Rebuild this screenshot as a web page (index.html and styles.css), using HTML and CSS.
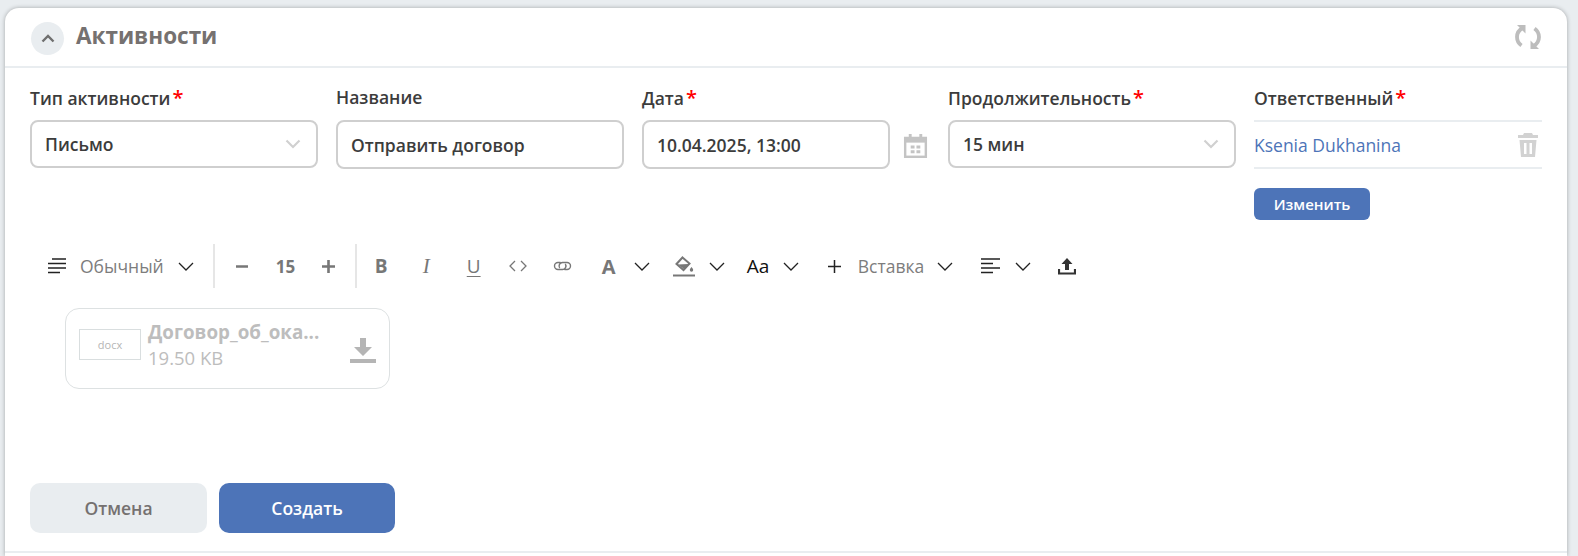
FILE: index.html
```html
<!DOCTYPE html>
<html lang="en">
<head>
  <meta charset="UTF-8">
  <title>Активности</title>
  <link rel="stylesheet" href="styles.css">
</head>
<body>
  <section class="card">
    <header class="card-head">
      <span class="collapse">
        <svg width="14" height="9" viewBox="0 0 14 9"><path d="M1.500 7.500L7 2l5.500 5.500" fill="none" stroke="#6f6f6f" stroke-width="2.400"/></svg>
      </span>
      <h2 class="card-title">Активности</h2>
      <svg class="refresh" width="26" height="26" viewBox="0 0 26 26">
        <path d="M7.500 4C4 6 2 9 2 13c0 3.500 1.700 6.500 4.500 8.500" fill="none" stroke="#bdbdbd" stroke-width="3.800"/>
        <path d="M2 1h8.500v8.500z" fill="#bdbdbd"/>
        <path d="M18.500 22C22 20 24 17 24 13c0-3.500-1.700-6.500-4.500-8.500" fill="none" stroke="#bdbdbd" stroke-width="3.800"/>
        <path d="M24 25h-8.500v-8.500z" fill="#bdbdbd"/>
      </svg>
    </header>

    <div class="fields">
      <div class="field">
        <label class="label">Тип активности<span class="req">*</span></label>
        <div class="input input-select">Письмо
          <svg class="caret" width="16" height="10" viewBox="0 0 16 10"><path d="M1.500 1.500L8 8l6.500-6.500" fill="none" stroke="#d0d0d0" stroke-width="2.200"/></svg>
        </div>
      </div>
      <div class="field">
        <label class="label">Название</label>
        <div class="input">Отправить договор</div>
      </div>
      <div class="field">
        <label class="label">Дата<span class="req">*</span></label>
        <div class="date-row">
          <div class="input input-date">10.04.2025, 13:00</div>
          <svg class="ic-cal" width="25" height="25" viewBox="0 0 26 26">
            <path d="M1 4h5V1h3v3h8V1h3v3h5v22H1z" fill="#c4c4c4"/>
            <rect x="3.500" y="10" width="19" height="13.500" fill="#fff"/>
            <path d="M8 13h4v3H8zM14 13h4v3h-4zM8 18h4v3H8zM14 18h4v3h-4z" fill="#c4c4c4"/>
          </svg>
        </div>
      </div>
      <div class="field">
        <label class="label">Продолжительность<span class="req">*</span></label>
        <div class="input input-select">15 мин
          <svg class="caret" width="16" height="10" viewBox="0 0 16 10"><path d="M1.500 1.500L8 8l6.500-6.500" fill="none" stroke="#d0d0d0" stroke-width="2.200"/></svg>
        </div>
      </div>
      <div class="field">
        <label class="label">Ответственный<span class="req">*</span></label>
        <div class="owner">
          <a class="owner-name">Ksenia Dukhanina</a>
          <svg width="22" height="26" viewBox="0 0 22 26">
            <path d="M7 1h8l1 2h5v3H1V3h5z" fill="#d2d2d2"/>
            <path d="M2.500 8h17l-1.500 17H4zM7 11v11h2.500V11zM12.500 11v11H15V11z" fill="#d2d2d2" fill-rule="evenodd"/>
          </svg>
        </div>
        <button class="btn-small">Изменить</button>
      </div>
    </div>

    <div class="toolbar">
      <svg class="ic-style" width="18" height="16" viewBox="0 0 18 16"><path d="M4 1h14M0 5.500h18M0 10h18M0 14.500h12" stroke="#222" stroke-width="1.500"/></svg>
      <span class="tool-text tool-style">Обычный</span>
      <svg class="chev" width="16" height="9" viewBox="0 0 16 9"><path d="M1 1l7 7 7-7" fill="none" stroke="#222" stroke-width="1.300"/></svg>
      <span class="sep sep-a"></span>
      <svg class="size-minus" width="12" height="3" viewBox="0 0 12 3"><path d="M0 1.500h12" stroke="#777" stroke-width="2.500"/></svg>
      <span class="size-num">15</span>
      <svg class="size-plus" width="13" height="13" viewBox="0 0 13 13"><path d="M0 6.500h13M6.500 0v13" stroke="#777" stroke-width="2.600"/></svg>
      <span class="sep sep-b"></span>
      <span class="fmt fmt-b">B</span>
      <span class="fmt fmt-i">I</span>
      <span class="fmt fmt-u">U</span>
      <svg class="ic-code" width="18" height="12" viewBox="0 0 18 12"><path d="M6 1L1 6l5 5M12 1l5 5-5 5" fill="none" stroke="#777" stroke-width="1.300"/></svg>
      <svg class="ic-link" width="19" height="10" viewBox="0 0 19 10"><path d="M7.500 1.500H5a3.500 3.500 0 0 0 0 7h4.500a3.500 3.500 0 0 0 2.800-5.500M11.500 8.500H14a3.500 3.500 0 0 0 0-7H9.500a3.500 3.500 0 0 0-2.800 5.500" fill="none" stroke="#777" stroke-width="1.400"/></svg>
      <span class="fmt fmt-a">A</span>
      <svg class="chev chev-a" width="16" height="9" viewBox="0 0 16 9"><path d="M1 1l7 7 7-7" fill="none" stroke="#222" stroke-width="1.300"/></svg>
      <svg class="ic-fill" width="22" height="21" viewBox="0 0 22 21">
        <path d="M9.500 1.500l7 6-6 6.500-7-6z" fill="none" stroke="#777" stroke-width="2"/>
        <path d="M5 8.500l10.500-.5-4.500 5z" fill="#777"/>
        <path d="M18.500 11c1.200 1.500 1.700 2.400 1.700 3.100a1.700 1.700 0 0 1-3.400 0c0-.7.500-1.600 1.700-3.100z" fill="#777"/>
        <path d="M0 19.500h22" stroke="#777" stroke-width="2"/>
      </svg>
      <svg class="chev chev-fill" width="16" height="9" viewBox="0 0 16 9"><path d="M1 1l7 7 7-7" fill="none" stroke="#222" stroke-width="1.300"/></svg>
      <span class="fmt-aa">Aa</span>
      <svg class="chev chev-aa" width="16" height="9" viewBox="0 0 16 9"><path d="M1 1l7 7 7-7" fill="none" stroke="#222" stroke-width="1.300"/></svg>
      <svg class="ic-plus" width="13" height="13" viewBox="0 0 13 13"><path d="M0 6.500h13M6.500 0v13" stroke="#222" stroke-width="1.500"/></svg>
      <span class="tool-text tool-insert">Вставка</span>
      <svg class="chev" width="16" height="9" viewBox="0 0 16 9"><path d="M1 1l7 7 7-7" fill="none" stroke="#222" stroke-width="1.300"/></svg>
      <svg class="ic-align" width="19" height="16" viewBox="0 0 19 16"><path d="M0 1h19M0 5.500h12M0 10h19M0 14.500h12" stroke="#222" stroke-width="1.500"/></svg>
      <svg class="chev chev-align" width="16" height="9" viewBox="0 0 16 9"><path d="M1 1l7 7 7-7" fill="none" stroke="#222" stroke-width="1.300"/></svg>
      <svg class="ic-upload" width="18" height="18" viewBox="0 0 18 18"><path d="M9 1l5.500 6H11v6H7V7H3.500z" fill="#333"/><path d="M1 12v4.500h16V12" fill="none" stroke="#333" stroke-width="2.200"/></svg>
    </div>

    <div class="attachment">
      <span class="thumb">docx</span>
      <div class="file-info">
        <div class="file-name">Договор_об_ока...</div>
        <div class="file-size">19.50 KB</div>
      </div>
      <svg class="file-down" width="26" height="25" viewBox="0 0 26 25"><path d="M10 1h6v9h6l-9 9-9-9h6z" fill="#b5b5b5" transform="translate(0 -1)"/><path d="M0 23h26" stroke="#b5b5b5" stroke-width="4"/></svg>
    </div>

    <div class="actions">
      <button class="btn btn-cancel">Отмена</button>
      <button class="btn btn-create">Создать</button>
    </div>
  </section>
</body>
</html>
```

FILE: styles.css
```css
html, body {
  height: 100%;
}

body {
  margin: 0;
  padding: 8px 11px 0 5px;
  box-sizing: border-box;
  overflow: hidden;
  background-color: #e9edf0;
  font-family: 'Open Sans', 'Noto Sans', sans-serif;
  color: #3c3c3c;
}

.card {
  height: 548px;
  box-sizing: border-box;
  background-color: #fff;
  border-radius: 14px 14px 0 0;
  box-shadow: 0 0 4px rgba(0, 0, 0, 0.3);
  display: flex;
  flex-direction: column;
}

/* Header */
.card-head {
  height: 60px;
  flex: none;
  box-sizing: border-box;
  border-bottom: 2px solid #e9edf0;
  display: flex;
  align-items: center;
  padding: 0 26px 0 26px;
}

.collapse {
  width: 33px;
  height: 33px;
  margin-top: 3px;
  border-radius: 50%;
  background-color: #e9edf0;
  display: flex;
  align-items: center;
  justify-content: center;
}

.card-title {
  margin: 0 0 2px 12px;
  font-size: 22.500px;
  font-weight: 700;
  line-height: 30px;
  color: #757170;
}

.refresh {
  margin-left: auto;
}

/* Fields */
.fields {
  display: grid;
  grid-template-columns: repeat(5, 288px);
  column-gap: 18px;
  padding: 15px 0 0 25px;
  height: 149px;
  flex: none;
  box-sizing: border-box;
}

.label {
  display: block;
  height: 37px;
  line-height: 29px;
  font-size: 17.500px;
  font-weight: 600;
}

.req {
  color: #f00;
  margin-left: 2px;
  font-size: 20px;
}

.input {
  flex: 1;
  height: 49px;
  box-sizing: border-box;
  border: 2px solid #cfcfcf;
  border-radius: 8px;
  padding: 0 13px;
  display: flex;
  align-items: center;
  justify-content: space-between;
  font-size: 17.500px;
  font-weight: 600;
}

.input-select {
  height: 48px;
}

.input-date {
  flex: none;
  width: 248px;
}

.ic-cal {
  margin-top: 2px;
}

.caret {
  margin-right: 2px;
}

.date-row {
  display: flex;
  align-items: center;
  gap: 13px;
}

.owner {
  height: 49px;
  box-sizing: border-box;
  border-top: 2px solid #e9edf0;
  border-bottom: 2px solid #e9edf0;
  display: flex;
  align-items: center;
  justify-content: space-between;
  padding: 0 3px 0 0;
}

.owner-name {
  font-size: 17.500px;
  color: #4d74b8;
}

.btn-small {
  display: block;
  margin-top: 19px;
  width: 116px;
  height: 32px;
  border: none;
  border-radius: 6px;
  background-color: #4d74b8;
  color: #fff;
  font-family: inherit;
  font-size: 15px;
  font-weight: 600;
}

/* Toolbar */
.toolbar {
  height: 46px;
  flex: none;
  margin: 26px 0 0 43px;
  display: flex;
  align-items: center;
  font-size: 17.500px;
  color: #777;
}

.tool-text {
  color: #7d7d7d;
  margin-right: 14px;
}

.tool-style {
  margin-left: 14px;
}

.sep {
  width: 2px;
  height: 44px;
  background-color: #e6e6e6;
}

.sep-a {
  margin-left: 19px;
}

.size-minus {
  margin-left: 21px;
}

.size-num {
  margin-left: 28px;
  width: 20px;
  font-weight: 700;
  font-size: 17px;
}

.size-plus {
  margin-left: 26px;
}

.sep-b {
  margin-left: 20px;
}

.fmt {
  font-size: 19px;
}

.fmt-b {
  margin-left: 18px;
  width: 12px;
  font-weight: 700;
}

.fmt-i {
  margin-left: 36px;
  width: 9px;
  font-family: 'Liberation Serif', serif;
  font-size: 21px;
  font-style: italic;
}

.fmt-u {
  margin-left: 35px;
  width: 13px;
  text-decoration: underline;
  text-underline-offset: 3px;
}

.ic-code {
  margin-left: 29px;
}

.ic-link {
  margin-left: 26px;
}

.fmt-a {
  margin-left: 30px;
  width: 14px;
  font-size: 20px;
  font-weight: 700;
}

.chev-a {
  margin-left: 18px;
}

.ic-fill {
  margin-left: 23px;
}

.chev-fill {
  margin-left: 14px;
}

.fmt-aa {
  margin-left: 22px;
  width: 22px;
  font-size: 19px;
  color: #111;
}

.chev-aa {
  margin-left: 14px;
}

.ic-plus {
  margin-left: 29px;
}

.tool-insert {
  margin-left: 17px;
  margin-right: 13px;
}

.ic-align {
  margin-left: 28px;
}

.chev-align {
  margin-left: 15px;
}

.ic-upload {
  margin-left: 27px;
}

/* Attachment */
.attachment {
  width: 325px;
  height: 81px;
  flex: none;
  box-sizing: border-box;
  margin: 19px 0 0 60px;
  border: 1px solid #dde1e2;
  border-radius: 14px;
  display: flex;
  align-items: center;
  padding: 0 13px 8px 13px;
}

.thumb {
  width: 62px;
  height: 31px;
  box-sizing: border-box;
  border: 1px solid #d9dedf;
  display: flex;
  align-items: center;
  justify-content: center;
  font-size: 11px;
  color: #b5b5b5;
  flex: none;
}

.file-info {
  margin-left: 7px;
  flex: 1;
}

.file-name {
  font-size: 18.800px;
  line-height: 25px;
  font-weight: 700;
  color: #bdbdbd;
}

.file-size {
  font-size: 18.500px;
  line-height: 25px;
  color: #bdbdbd;
}

.file-down {
  margin-top: 12px;
}

/* Footer buttons */
.actions {
  margin-top: 94px;
  padding: 0 0 18px 25px;
  border-bottom: 2px solid #e9edf0;
  display: flex;
  gap: 12px;
}

.btn {
  width: 177px;
  height: 50px;
  border: none;
  border-radius: 10px;
  font-family: inherit;
  font-size: 17.500px;
  font-weight: 600;
}

.btn-cancel {
  background-color: #e9edf0;
  color: #757170;
}

.btn-create {
  width: 176px;
  background-color: #4d74b8;
  color: #fff;
}
```
